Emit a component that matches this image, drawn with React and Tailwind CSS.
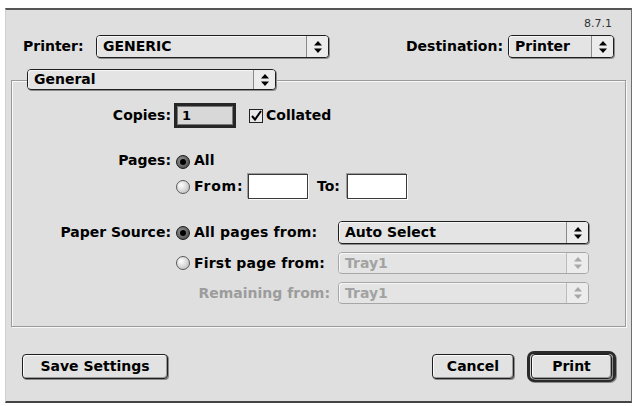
import React from 'react';

const Arrows = ({ dim }) => (
  <svg width="8" height="12" viewBox="0 0 8 12" className={dim ? 'fill-[#a8a8a8]' : 'fill-black'}>
    <path d="M4 0 L8 4.5 H0 Z" />
    <path d="M0 7.5 H8 L4 12 Z" />
  </svg>
);

const Popup = ({ label, className, dim }) => (
  <div
    className={`flex rounded-[4px] border bg-[#e4e4e4] ${
      dim ? 'border-[#a6a6a6]' : 'border-[#1e1e1e] shadow-[1px_1px_0_#8c8c8c]'
    } ${className}`}
  >
    <div
      className={`flex flex-1 items-center rounded-l-[3px] pl-[6px] text-[14px] font-bold shadow-[inset_1px_1px_0_#f6f6f6] ${
        dim ? 'text-[#a2a2a2]' : 'text-black'
      }`}
    >
      {label}
    </div>
    <div
      className={`flex w-[22px] items-center justify-center rounded-r-[3px] border-l bg-[#ececec] ${
        dim ? 'border-[#bcbcbc]' : 'border-[#8a8a8a]'
      }`}
    >
      <Arrows dim={dim} />
    </div>
  </div>
);

const Field = ({ className }) => (
  <div className={`h-[25px] border border-[#3a3a3a] bg-white shadow-[-1px_-1px_0_#9c9c9c,1px_1px_0_#fafafa] ${className}`} />
);

const Radio = ({ on }) => (
  <span
    className={`inline-flex h-[14px] w-[14px] shrink-0 items-center justify-center rounded-full border ${
      on
        ? 'border-[#1a1a1a] bg-[radial-gradient(circle_at_40%_40%,#9a9a9a,#3a3a3a)]'
        : 'border-[#5a5a5a] bg-[radial-gradient(circle_at_35%_35%,#ffffff,#b4b4b4)]'
    }`}
  >
    {on && <span className="h-[6px] w-[6px] rounded-full bg-black" />}
  </span>
);

const Button = ({ children, className }) => (
  <div
    className={`flex h-[25px] items-center justify-center rounded-[4px] border border-[#1e1e1e] bg-[#e2e2e2] text-[14px] font-bold shadow-[inset_1px_1px_0_#fafafa,inset_-1px_-1px_0_#9a9a9a,1px_1px_0_#8a8a8a] ${className}`}
  >
    {children}
  </div>
);

export default function App() {
  return (
    <div className="h-[406px] w-[637px] bg-white pl-[5px] pt-[8px] font-['DejaVu_Sans','Liberation_Sans',sans-serif] text-black">
      <div className="flex h-[395px] w-[627px] flex-col border-b-2 border-l border-r border-t-2 border-b-[#444] border-l-[#cfcfcf] border-r-[#6e6e6e] border-t-[#555] bg-[#dfdfdf]">
        <div className="mt-[7px] h-[14px] pr-[19px] text-right text-[11px] leading-[14px] text-[#333]">8.7.1</div>

        <div className="mt-[4px] flex h-[23px] items-center pl-[17px] pr-[17px]">
          <span className="w-[73px] text-[14px] font-bold">Printer:</span>
          <Popup label="GENERIC" className="h-[23px] w-[233px]" />
          <div className="flex-1" />
          <span className="mr-[5px] text-[14px] font-bold">Destination:</span>
          <Popup label="Printer" className="h-[23px] w-[106px]" />
        </div>

        <div className="relative z-10 ml-[21px] mt-[11px]">
          <Popup label="General" className="h-[21px] w-[249px]" />
        </div>

        <div className="ml-[5px] mt-[-10px] flex h-[247px] w-[615px] flex-col border border-[#9a9a9a] shadow-[inset_1px_1px_0_#f8f8f8,1px_1px_0_#f8f8f8] text-[14px] font-bold">
          <div className="mt-[22px] flex h-[25px] items-center">
            <span className="w-[159px] text-right">Copies:</span>
            <div className="ml-[3px] h-[25px] w-[62px] border-[3px] border-[#262626]">
              <div className="flex h-full items-center border border-[#7a7a7a] bg-[#d8d8d8] pl-[4px] text-[13px]">1</div>
            </div>
            <span className="ml-[13px] flex h-[14px] w-[14px] items-center justify-center border border-[#222] bg-[#e8e8e8]">
              <svg width="12" height="12" viewBox="0 0 12 12" className="stroke-black" fill="none" strokeWidth="2">
                <path d="M2 6 L5 9.5 L11 1" />
              </svg>
            </span>
            <span className="ml-[3px]">Collated</span>
          </div>

          <div className="mt-[22px] flex h-[20px] items-center">
            <span className="w-[159px] text-right">Pages:</span>
            <span className="ml-[5px]"><Radio on /></span>
            <span className="ml-[4px]">All</span>
          </div>
          <div className="mt-[4px] flex h-[25px] items-center">
            <span className="w-[164px]" />
            <div className="flex w-[72px] items-center">
              <Radio />
              <span className="ml-[4px] tracking-[0.8px]">From:</span>
            </div>
            <Field className="w-[60px]" />
            <span className="ml-[9px] w-[30px]">To:</span>
            <Field className="w-[60px]" />
          </div>

          <div className="mt-[22px] flex h-[23px] items-center">
            <span className="w-[159px] text-right">Paper Source:</span>
            <div className="ml-[5px] flex w-[162px] items-center">
              <Radio on />
              <span className="ml-[4px] tracking-[0.2px]">All pages from:</span>
            </div>
            <Popup label="Auto Select" className="h-[23px] w-[251px]" />
          </div>
          <div className="mt-[8px] flex h-[22px] items-center">
            <span className="w-[164px]" />
            <div className="flex w-[162px] items-center">
              <Radio />
              <span className="ml-[4px] tracking-[0.2px]">First page from:</span>
            </div>
            <Popup label="Tray1" className="h-[22px] w-[251px]" dim />
          </div>
          <div className="mt-[8px] flex h-[22px] items-center">
            <span className="w-[163px]" />
            <span className="w-[163px] pr-[8px] text-right text-[#9c9c9c]">Remaining from:</span>
            <Popup label="Tray1" className="h-[22px] w-[251px]" dim />
          </div>
        </div>

        <div className="mt-[24px] flex h-[31px] items-center pl-[16px] pr-[15px]">
          <Button className="w-[146px]">Save Settings</Button>
          <div className="flex-1" />
          <Button className="w-[82px]">Cancel</Button>
          <div className="ml-[13px] flex h-[31px] w-[89px] items-center justify-center rounded-[7px] border-[3px] border-[#2a2a2a] bg-[#cfcfcf] shadow-[1px_1px_0_#8a8a8a]">
            <Button className="h-[23px] w-[81px]">Print</Button>
          </div>
        </div>
      </div>
    </div>
  );
}
